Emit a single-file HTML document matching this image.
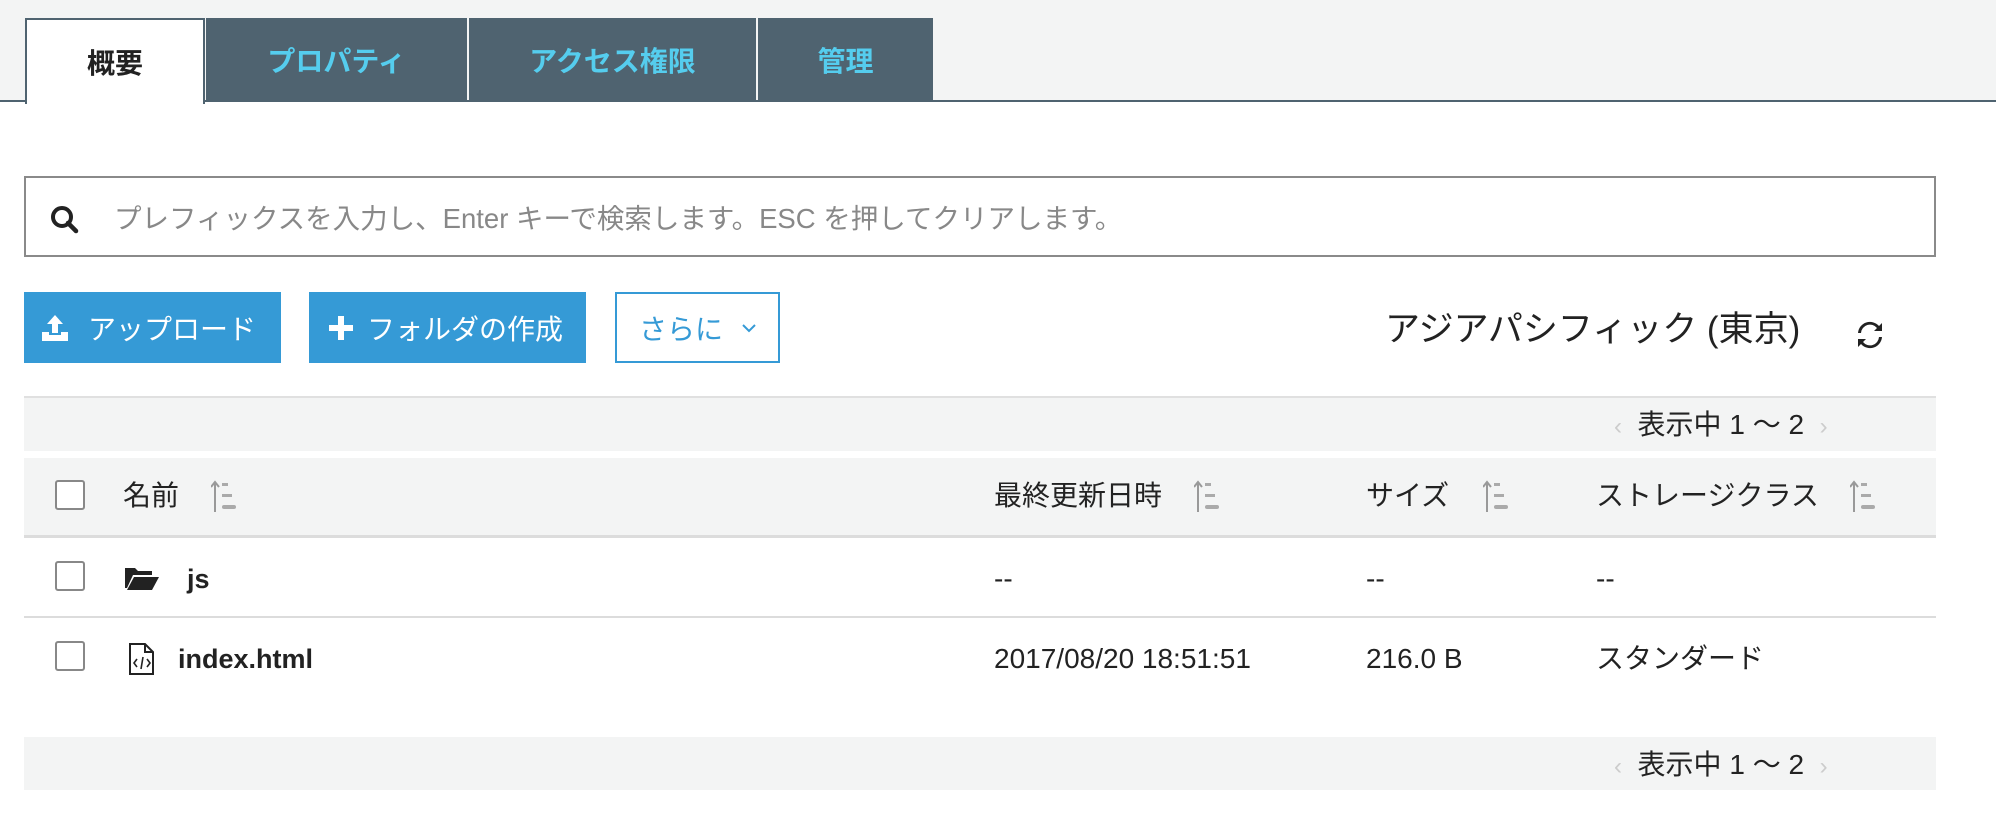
<!DOCTYPE html>
<html><head><meta charset="utf-8"><style>
*{box-sizing:border-box;margin:0;padding:0}
body{width:1996px;height:834px;background:#fff;font-family:"Liberation Sans","Noto Sans CJK JP",sans-serif;color:#222;position:relative;overflow:hidden}
.abs{position:absolute}
.top{left:0;top:0;width:1996px;height:102px;background:#f3f4f4;border-bottom:2px solid #4f6370}
.tab{position:absolute;top:18px;height:84px;background:#4f6370;color:#55cdee;font-weight:bold;font-size:28px;display:flex;align-items:center;justify-content:center}
.tab.a{background:#fff;color:#222;border:2px solid #4f6370;border-bottom:none;height:86px}
.search{left:24px;top:176px;width:1912px;height:81px;border:2px solid #8a8a8a;background:#fff}
.search span{position:absolute;left:88px;top:24px;font-size:27.5px;line-height:34px;color:#888}
.btn{position:absolute;top:292px;height:71px;background:#359ad6;color:#fff;font-size:28px;display:flex;align-items:center}
.bar{left:24px;width:1912px;background:#f3f4f4}
.pg{position:absolute;font-size:28px;line-height:34px;color:#222}
.chev{color:#ccc;font-size:24px}
.cb{position:absolute;left:55px;width:30px;height:30px;border:2px solid #888;border-radius:3px;background:#fff}
.t{position:absolute;font-size:28px;line-height:34px;color:#222}
.sort{position:absolute;width:30px;height:32px}
</style></head><body>
<div class="abs top"></div>
<div class="tab a" style="left:25px;width:180px">概要</div>
<div class="tab" style="left:206px;width:261px">プロパティ</div>
<div class="tab" style="left:469px;width:287px">アクセス権限</div>
<div class="tab" style="left:758px;width:175px">管理</div>

<div class="abs search">
<svg class="abs" style="left:24px;top:27px" width="32" height="30" viewBox="0 0 32 30"><circle cx="12" cy="12" r="9" fill="none" stroke="#222" stroke-width="4"/><path d="M18 18l8 8" stroke="#222" stroke-width="4.5" stroke-linecap="round"/></svg>
<span>プレフィックスを入力し、Enter キーで検索します。ESC を押してクリアします。</span></div>

<div class="btn" style="left:24px;width:257px"><svg style="margin:0 18px 0 16px" width="30" height="30" viewBox="0 0 30 30"><path d="M15 2l-8 9h5v9h6v-9h5z" fill="#fff"/><path d="M2 19h7v3h12v-3h7v9H2z" fill="#fff"/></svg>アップロード</div>
<div class="btn" style="left:309px;width:277px"><svg style="margin:0 14px 0 20px" width="24" height="24" viewBox="0 0 24 24"><path d="M9 0h6v9h9v6h-9v9H9v-9H0V9h9z" fill="#fff"/></svg>フォルダの作成</div>
<div class="btn" style="left:615px;width:165px;background:#fff;border:2px solid #359ad6;color:#359ad6"><span style="margin-left:22px">さらに</span><svg style="margin-left:18px" width="16" height="10" viewBox="0 0 16 10"><path d="M2 2l6 6 6-6" fill="none" stroke="#359ad6" stroke-width="2"/></svg></div>

<div class="abs" style="left:1385px;top:309px;font-size:35px;line-height:42px;color:#222">アジアパシフィック (東京)</div>
<svg class="abs" style="left:1856px;top:321px" width="28" height="28" viewBox="0 0 28 28"><path d="M5 12A9 9 0 0 1 21 7l-3 3h8V2l-3 3A12 12 0 0 0 2 12z" fill="#222"/><path d="M23 16A9 9 0 0 1 7 21l3-3H2v8l3-3a12 12 0 0 0 21-7z" fill="#222"/></svg>

<div class="abs bar" style="top:396px;height:55px;border-top:2px solid #e0e0e0"></div>
<div class="pg" style="left:1614px;top:408px"><span class="chev">‹</span>&nbsp; 表示中 1 〜 2 &nbsp;<span class="chev">›</span></div>

<div class="abs bar" style="top:458px;height:80px;border-bottom:3px solid #dcdcdc"></div>
<div class="cb" style="top:480px"></div>
<div class="t" style="left:123px;top:479px">名前</div>
<div class="t" style="left:994px;top:479px">最終更新日時</div>
<div class="t" style="left:1366px;top:479px">サイズ</div>
<div class="t" style="left:1596px;top:479px">ストレージクラス</div>
<svg class="sort" style="left:211px;top:480px" viewBox="0 0 30 32"><path d="M4 2v30M0 7l4-5 4 5" fill="none" stroke="#999" stroke-width="2"/><rect x="11" y="3" width="6" height="3" fill="#aaa"/><rect x="11" y="14" width="10" height="3" fill="#aaa"/><rect x="11" y="25" width="14" height="4" rx="2" fill="#aaa"/></svg>
<svg class="sort" style="left:1194px;top:480px" viewBox="0 0 30 32"><path d="M4 2v30M0 7l4-5 4 5" fill="none" stroke="#999" stroke-width="2"/><rect x="11" y="3" width="6" height="3" fill="#aaa"/><rect x="11" y="14" width="10" height="3" fill="#aaa"/><rect x="11" y="25" width="14" height="4" rx="2" fill="#aaa"/></svg>
<svg class="sort" style="left:1483px;top:480px" viewBox="0 0 30 32"><path d="M4 2v30M0 7l4-5 4 5" fill="none" stroke="#999" stroke-width="2"/><rect x="11" y="3" width="6" height="3" fill="#aaa"/><rect x="11" y="14" width="10" height="3" fill="#aaa"/><rect x="11" y="25" width="14" height="4" rx="2" fill="#aaa"/></svg>
<svg class="sort" style="left:1850px;top:480px" viewBox="0 0 30 32"><path d="M4 2v30M0 7l4-5 4 5" fill="none" stroke="#999" stroke-width="2"/><rect x="11" y="3" width="6" height="3" fill="#aaa"/><rect x="11" y="14" width="10" height="3" fill="#aaa"/><rect x="11" y="25" width="14" height="4" rx="2" fill="#aaa"/></svg>

<div class="abs" style="left:24px;top:616px;width:1912px;height:2px;background:#dcdcdc"></div>
<div class="cb" style="top:561px"></div>
<svg class="abs" style="left:125px;top:566px" width="34" height="24" viewBox="0 0 34 24"><path d="M0 2h10l3 3h14v4H8L2 22H0z" fill="#222"/><path d="M9 11h25l-7 13H2z" fill="#222"/></svg>
<div class="t" style="left:187px;top:562px;font-weight:bold;font-size:27px">js</div>
<div class="t" style="left:994px;top:562px">--</div>
<div class="t" style="left:1366px;top:562px">--</div>
<div class="t" style="left:1596px;top:562px">--</div>

<div class="cb" style="top:641px"></div>
<svg class="abs" style="left:128px;top:643px" width="28" height="32" viewBox="0 0 28 32"><path d="M2 1h15l8 8v22H2z M17 1v8h8" fill="none" stroke="#222" stroke-width="2"/><path d="M9 16l-3 4 3 4M19 16l3 4-3 4M15 14l-2 12" fill="none" stroke="#222" stroke-width="1.6"/></svg>
<div class="t" style="left:178px;top:642px;font-weight:bold;font-size:27px">index.html</div>
<div class="t" style="left:994px;top:642px">2017/08/20 18:51:51</div>
<div class="t" style="left:1366px;top:642px">216.0 B</div>
<div class="t" style="left:1596px;top:642px">スタンダード</div>

<div class="abs bar" style="top:737px;height:53px"></div>
<div class="pg" style="left:1614px;top:748px"><span class="chev">‹</span>&nbsp; 表示中 1 〜 2 &nbsp;<span class="chev">›</span></div>
</body></html>
